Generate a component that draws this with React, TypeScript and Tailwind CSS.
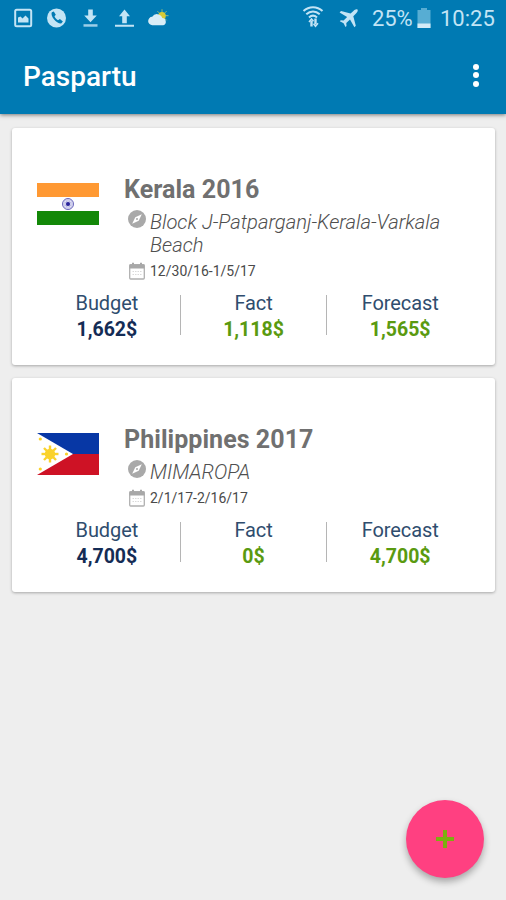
import type { ReactNode } from "react";

type Trip = {
  title: string;
  place: string;
  dates: string;
  budget: string;
  fact: string;
  forecast: string;
  flag: ReactNode;
};

const SPOKES = [0, 30, 60, 90, 120, 150];
const RAYS = [0, 45, 90, 135];

function IndiaFlag() {
  return (
    <svg viewBox="0 0 62 42" className="block h-[42px] w-[62px]">
      <rect width="62" height="42" fill="#fff" />
      <rect width="62" height="14" fill="#ff9933" />
      <rect y="28" width="62" height="14" fill="#138808" />
      <g stroke="#6a66bb" fill="none">
        <circle cx="31" cy="21" r="5.5" strokeWidth="1" fill="#e2e2f5" />
        {SPOKES.map((a) => (
          <path key={a} d="M26 21h10" strokeWidth=".3" transform={`rotate(${a} 31 21)`} />
        ))}
      </g>
      <circle cx="31" cy="21" r="2" fill="#29239a" />
    </svg>
  );
}

function PhilippinesFlag() {
  return (
    <svg viewBox="0 0 62 42" className="block h-[42px] w-[62px]">
      <rect width="62" height="21" fill="#0737a5" />
      <rect y="21" width="62" height="21" fill="#ce1225" />
      <path d="M0 0 36 21 0 42z" fill="#fff" />
      <g fill="#fad22c" stroke="#fad22c">
        <circle cx="13" cy="21" r="5.2" stroke="none" />
        {RAYS.map((a) => (
          <path key={a} d="M4.5 21h17" strokeWidth="2.4" transform={`rotate(${a} 13 21)`} />
        ))}
        <g stroke="none">
          <circle cx="3.3" cy="6" r="1.6" />
          <circle cx="3.3" cy="36" r="1.6" />
          <circle cx="29.5" cy="21" r="1.6" />
        </g>
      </g>
    </svg>
  );
}

const TRIPS: Trip[] = [
  {
    title: "Kerala 2016",
    place: "Block J-Patparganj-Kerala-Varkala Beach",
    dates: "12/30/16-1/5/17",
    budget: "1,662$",
    fact: "1,118$",
    forecast: "1,565$",
    flag: <IndiaFlag />,
  },
  {
    title: "Philippines 2017",
    place: "MIMAROPA",
    dates: "2/1/17-2/16/17",
    budget: "4,700$",
    fact: "0$",
    forecast: "4,700$",
    flag: <PhilippinesFlag />,
  },
];

function StatusBar() {
  return (
    <div className="flex h-9 items-center text-[#c3e4f5]">
      <svg viewBox="0 0 180 36" className="h-9 w-[180px] shrink-0" fill="currentColor">
        <rect x="15.2" y="9.7" width="16" height="16.6" rx="1.5" fill="none" stroke="currentColor" strokeWidth="2" />
        <path d="M18 22.5v-5l2.5-1 2 2 3-3 3 3v4z" />
        <circle cx="56.5" cy="18" r="9.5" />
        <path
          d="M51.8 12.2c-1.8 3.8 4.8 11.6 9.4 11.2l1.7-1.8-3-2.5-1.9 1.2c-1.5-.7-3-2.4-3.5-4l1.3-1.6-2-3.1z"
          fill="#007ab3"
        />
        <path d="M88.2 9.5h4.6v6h4l-6.3 6.8-6.3-6.8h4z" />
        <path d="M83.5 24.2h14v2.5h-14z" opacity=".8" />
        <path d="M122.2 23.3h4.6v-7h3.2l-5.5-6.8-5.5 6.8h3.2zM115 24.8h19v2h-19z" />
        <path d="M162 9.2v13M155.5 15.7h13M157.4 11.1l9.2 9.2M166.6 11.1l-9.2 9.2" stroke="#8fb97c" />
        <circle cx="162" cy="15.7" r="3.8" fill="#d8ca35" />
        <path d="M152.5 25.2a4.2 4.2 0 0 1-.3-8.4 5.6 5.6 0 0 1 10.1 1.2 3.7 3.7 0 0 1 1 7.2z" fill="#d8edf7" />
      </svg>
      <svg viewBox="300 0 66 36" className="ml-[120px] h-9 w-[66px] shrink-0" fill="none" stroke="currentColor">
        <path
          d="M303.5 11c5.5-5.1 13.5-5.1 19 0M306.3 14.2c4-3.7 9.4-3.7 13.4 0M309 17.4c2.5-2.2 5.500-2.200 8 0"
          strokeWidth="2"
        />
        <path d="M311.5 26.5v-6M315.500 18.500v6" strokeWidth="2.400" />
        <path d="m309 22 2.500-3 2 2.300M313.500 23.700l2 2.500 2.500-3" strokeWidth="1.500" />
        <path
          d="M357.5 9.4c-1.2-.8-2.9.3-4.1 1.5l-2.8 2.7-9.6-2.5-1.4 1.4 7.5 4.4-3.5 3.7-2.8-.3-1 1 3.8 1.9 1.9 3.8 1-1-.2-2.9 3.7-3.5 4.4 7.6 1.4-1.5-2.5-9.5 2.7-2.8c1.2-1.2 2.3-3 1.5-4z"
          fill="currentColor"
          stroke="none"
        />
      </svg>
      <span className="ml-[6px] w-[43px] pt-[2px] text-[22px] leading-[34px] tracking-[-0.1px]">25%</span>
      <svg viewBox="0 0 14 20" className="ml-[2px] h-5 w-[14px] shrink-0">
        <path d="M4 0h6v2h3.5v18H.5V2H4z" fill="#57add3" />
        <path d="M.5 15.5h13V20H.5z" fill="#d3ebf7" />
      </svg>
      <span className="ml-[9px] pt-[2px] text-[22px] leading-[34px] whitespace-nowrap">10:25</span>
    </div>
  );
}

function CompassIcon() {
  return (
    <svg viewBox="0 0 18 18" className="-mt-px h-[18px] w-[18px] shrink-0">
      <circle cx="9" cy="9" r="9" fill="#a9a9a9" />
      <path d="m13.8 4.2-3.1 6.5-6.5 3.1 3.1-6.5z" fill="#fff" />
      <circle cx="9" cy="9" r="1" fill="#a9a9a9" />
    </svg>
  );
}

function CalendarIcon() {
  return (
    <svg viewBox="0 0 16 18" className="h-[18px] w-4 shrink-0">
      <rect x=".7" y="2.7" width="14.6" height="14.3" rx="1" fill="#fff" stroke="#b0b0b0" strokeWidth="1.3" />
      <path d="M.5 2.5h15v4H.5zM3 .7h2v2H3zM11 .7h2v2h-2z" fill="#a8a8a8" />
      <path d="M3.5 9.5h9M3.5 12.5h9" stroke="#dadada" strokeDasharray="1.5 1" />
    </svg>
  );
}

function Stat({ label, value, color }: { label: string; value: string; color: string }) {
  return (
    <div className="flex-1 text-center">
      <div className="text-[20px] leading-[26px] tracking-[-0.1px] text-[#2f4d6e]">{label}</div>
      <div className={`text-[19.5px] leading-7 font-bold ${color}`}>{value}</div>
    </div>
  );
}

function Divider() {
  return <div className="mt-[5px] h-10 w-px bg-[#b5b5b5]" />;
}

function TripCard({ trip }: { trip: Trip }) {
  return (
    <div className="rounded-[3px] bg-white pt-[47px] pb-[21px] shadow-[0_1px_3px_rgba(0,0,0,0.3)]">
      <div className="flex pl-[25px]">
        <div className="mt-2 h-[42px] w-[62px] shrink-0">{trip.flag}</div>
        <div className="ml-[25px] w-[330px]">
          <h2 className="text-[25px] leading-[30px] font-bold tracking-[0.05px] text-[#707070]">{trip.title}</h2>
          <div className="mt-[6px] flex pl-1">
            <CompassIcon />
            <p className="ml-1 flex-1 text-[20.2px] leading-[23px] font-light text-[#4f4f4f] italic">{trip.place}</p>
          </div>
          <div className="mt-1 flex h-5 items-center pl-[5px]">
            <CalendarIcon />
            <span className="ml-[5px] text-[14px] leading-5 text-[#4a4a4a]">{trip.dates}</span>
          </div>
        </div>
      </div>
      <div className="mt-[9px] flex px-[22px]">
        <Stat label="Budget" value={trip.budget} color="text-[#142c55]" />
        <Divider />
        <Stat label="Fact" value={trip.fact} color="text-[#5a9a10]" />
        <Divider />
        <Stat label="Forecast" value={trip.forecast} color="text-[#5a9a10]" />
      </div>
    </div>
  );
}

export default function App() {
  return (
    <div className="flex h-[900px] w-[506px] flex-col overflow-hidden bg-[#eeeeee] font-[Roboto,sans-serif]">
      <header className="h-[114px] shrink-0 bg-[#007ab3] shadow-[0_1px_4px_rgba(0,0,0,0.5)]">
        <StatusBar />
        <div className="flex h-[78px] items-center justify-between pr-[27px] pl-[23px]">
          <h1 className="pt-[3px] text-[28px] leading-8 font-medium text-white">Paspartu</h1>
          <div className="flex flex-col gap-[2.5px]">
            <i className="h-[6px] w-[6px] rounded-full bg-white" />
            <i className="h-[6px] w-[6px] rounded-full bg-white" />
            <i className="h-[6px] w-[6px] rounded-full bg-white" />
          </div>
        </div>
      </header>
      <main className="flex flex-1 flex-col gap-[13px] pt-[14px] pr-[11px] pl-3">
        {TRIPS.map((t) => (
          <TripCard key={t.title} trip={t} />
        ))}
      </main>
      <div className="flex justify-end pr-[22px] pb-[22px]">
        <button className="flex h-[78px] w-[78px] items-center justify-center rounded-full bg-[#ff4081] shadow-[0_4px_7px_rgba(0,0,0,0.3)]">
          <svg viewBox="0 0 18 18" className="h-[18px] w-[18px]">
            <path d="M9 0v18M0 9h18" stroke="#7cb010" strokeWidth="4" />
          </svg>
        </button>
      </div>
    </div>
  );
}
